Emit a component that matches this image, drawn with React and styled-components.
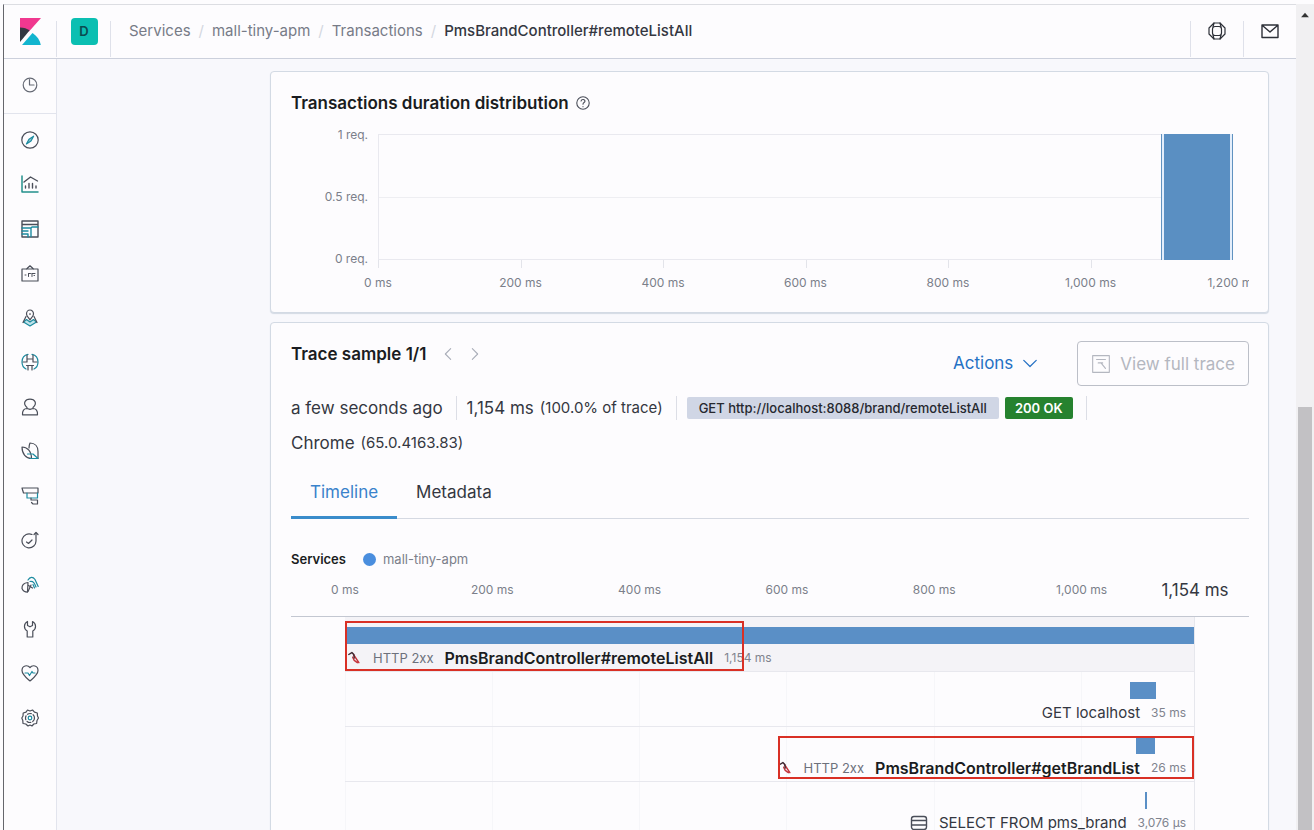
import React, { useState } from "react";
import styled, { createGlobalStyle, css } from "styled-components";

const GlobalStyle = createGlobalStyle`
  * {
    box-sizing: border-box;
  }
  body {
    margin: 0;
    color: #343741;
    font-family: Inter, "Liberation Sans", sans-serif;
    font-size: 16px;
    line-height: 24px;
  }
  button {
    padding: 0;
    border: none;
    background: none;
    color: inherit;
    font: inherit;
    cursor: pointer;
  }
  a {
    color: inherit;
    text-decoration: none;
  }
  svg {
    display: block;
    flex: none;
  }
`;

const Window = styled.div`
  display: flex;
  height: 100vh;
  padding: 4px 0 0 3px;
  overflow: hidden;
  background-color: #fdfcfe;
`;
const Page = styled.div`
  flex: 1;
  min-width: 0;
  display: flex;
  flex-direction: column;
  border-top: 1px solid #dcdde2;
  border-left: 1px solid #65666c;
`;

/* header */
const Header = styled.header`
  display: flex;
  flex: none;
  height: 54px;
  padding-bottom: 1px;
  border-bottom: 1px solid #ccd0dc;
`;
const HeaderCell = styled.div`
  width: ${(props) => props.$width || "53px"};
  display: flex;
  align-items: center;
  justify-content: center;
  background-image: linear-gradient(#dfe1ea, #dfe1ea);
  background-repeat: no-repeat;
  background-size: 1px 36px;
  background-position: ${(props) => props.$line || "right"} bottom;
`;
const Space = styled.button`
  width: 27px;
  height: 27px;
  border-radius: 4px;
  background-color: #0bbfb2;
  color: #0b4a50;
  font-size: 13px;
  font-weight: 600;
`;
const Breadcrumbs = styled.nav`
  flex: 1;
  display: flex;
  align-items: center;
  gap: 8px;
  padding-left: 18px;
  color: #777b87;
  font-size: 15px;
`;
const Slash = styled.span`
  color: #d3d7e0;
`;
const Current = styled.span`
  color: #343741;
  font-weight: 500;
`;

/* side bar */
const Body = styled.div`
  flex: 1;
  min-height: 0;
  display: flex;
`;
const Sidebar = styled.aside`
  width: 53px;
  display: flex;
  flex-direction: column;
  flex: none;
  border-right: 1px solid #e2e4ed;
`;
const Recent = styled.div`
  display: flex;
  justify-content: center;
  padding: 17px 0 19px;
  border-bottom: 1px solid #e2e4ed;
`;
const AppList = styled.nav`
  flex: 1;
  display: flex;
  flex-direction: column;
  align-items: center;
  justify-content: space-between;
  padding: 17px 0 103px;
`;

/* content */
const Main = styled.main`
  flex: 1;
  min-width: 0;
  display: flex;
  flex-direction: column;
  gap: 9px;
  padding: 12px 27px 0 213px;
  background-color: #f8f8fc;
`;
const Panel = styled.section`
  flex: none;
  padding: ${(props) => props.$padding};
  border: 1px solid #d3dae4;
  border-radius: 4px;
  background-color: #fdfcfe;
  box-shadow: 0 1px 1px #d3dae4;
`;
const Title = styled.h2`
  display: flex;
  align-items: center;
  gap: 7px;
  margin: 0;
  color: #1a1c21;
  font-size: 17px;
  font-weight: 600;
  line-height: 26px;
`;

/* distribution chart */
const Chart = styled.div`
  display: grid;
  grid-template-columns: 87px 1fr;
  margin-top: 9px;
  padding: 9px 16px 0 0;
  overflow: hidden;
  color: #7b7f8a;
  font-size: 12px;
  line-height: 16px;
`;
const YAxis = styled.div`
  display: flex;
  flex-direction: column;
  justify-content: space-between;
  align-items: flex-end;
  margin: -7px 10px -7px 0;
`;
const Plot = styled.div`
  display: flex;
  justify-content: flex-end;
  height: 126px;
  border: solid #e9e9ef;
  border-width: 1px 0 1px 1px;
  background: linear-gradient(#eeeef2, #eeeef2) 0 62px / 100% 1px no-repeat;
`;
const Bucket = styled.button`
  width: 8.4%;
  margin: -1px 0;
  padding: 0 2px;
  border: solid #6092c0;
  border-width: 0 1px;
  background-color: #e4eefb;
`;
const BucketFill = styled.span`
  display: block;
  height: 100%;
  background-color: #5a8fc2;
`;
const Ticks = styled.div`
  grid-column: 2;
  display: grid;
  grid-template-columns: repeat(6, 1fr);
  height: 8px;
`;
const Tick = styled.span`
  border-left: 1px solid #e3e4ea;
`;
const XAxis = styled.div`
  grid-column: 2;
  display: flex;
  justify-content: space-between;
  padding: 7px 0 21px;
`;
const XLabel = styled.span`
  width: 0;
  display: flex;
  justify-content: center;
  white-space: nowrap;
`;

/* trace sample */
const TraceHeader = styled.div`
  display: flex;
  align-items: flex-start;
`;
const Pager = styled.div`
  display: flex;
  flex: 1;
  gap: 11px;
  padding: 5px 0 0 14px;
`;
const ActionsButton = styled.button`
  display: flex;
  align-items: center;
  gap: 9px;
  height: 44px;
  margin-right: 39px;
  color: #2571c4;
  font-size: 17px;
`;
const FullTraceButton = styled.button`
  display: flex;
  align-items: center;
  gap: 9px;
  height: 45px;
  padding: 0 13px;
  border: 1px solid #bcbfc8;
  border-radius: 4px;
  color: #b4b7c0;
  font-size: 17px;
  cursor: not-allowed;
`;
const Summary = styled.div`
  display: flex;
  flex-wrap: wrap;
  align-items: center;
  row-gap: 11px;
  margin-top: 10px;
  font-size: 17px;
`;
const SummaryItem = styled.div`
  display: flex;
  align-items: center;
  gap: 6px;
  height: 24px;
  padding-right: 13px;
  margin-right: 10px;
  border-right: 1px solid #dcdee6;
  white-space: nowrap;
  &:last-child {
    border: none;
  }
`;
const Small = styled.span`
  font-size: 15px;
`;
const Badge = styled.span`
  padding: 0 12px;
  border-radius: 2px;
  font-size: 13px;
  font-weight: 500;
  line-height: 22px;
  color: #26282f;
  background-color: #d0d6e5;
  ${(props) =>
    props.$success &&
    css`
      padding: 0 10px;
      font-weight: 600;
      color: #fff;
      background-color: #26822f;
    `}
`;
const Tabs = styled.div`
  display: flex;
  margin-top: 12px;
  border-bottom: 1px solid #d5d9e2;
`;
const Tab = styled.button`
  height: 52px;
  margin-bottom: -1px;
  padding: 0 19px;
  border-bottom: 3px solid transparent;
  font-size: 17px;
  ${(props) =>
    props.$active &&
    css`
      border-color: #3a8ccb;
      color: #3a82cb;
    `}
`;
const Legend = styled.div`
  display: flex;
  align-items: center;
  margin-top: 28px;
  color: #7b7f8a;
  font-size: 13px;
`;
const LegendTitle = styled.strong`
  margin-right: 17px;
  color: #1a1c21;
  font-weight: 600;
`;
const Dot = styled.span`
  width: 13px;
  height: 13px;
  margin-right: 7px;
  border-radius: 50%;
  background-color: #4a8ede;
`;

/* waterfall */
const Scale = styled.div`
  display: grid;
  grid-template-columns: repeat(5, minmax(0, 200fr)) minmax(0, 154fr) 0;
  align-items: center;
  height: 46px;
  padding: 0 54px 7px;
  border-bottom: 1px solid #c3c7d1;
  color: #7b7f8a;
  font-size: 12px;
`;
const ScaleEnd = styled(XLabel)`
  color: #343741;
  font-size: 17px;
`;
const Waterfall = styled.div`
  margin: 0 54px;
  border-right: 1px solid #e6e7ed;
  background-image: repeating-linear-gradient(
    to right,
    #f6f6f9 0 1px,
    transparent 1px 17.33%
  );
`;
const Row = styled.div`
  position: relative;
  height: 55px;
  padding-top: 10px;
  border-bottom: 1px solid #e8e8ee;
  background-color: ${(props) => (props.$selected ? "#f4f3f7" : "transparent")};
`;
const Bar = styled.div`
  height: 17px;
  background-color: #5a8fc6;
`;
const RowLabel = styled.div`
  display: flex;
  align-items: center;
  justify-content: ${(props) => (props.$align === "end" ? "flex-end" : "flex-start")};
  gap: 11px;
  padding: 2px 8px 0 3px;
  white-space: nowrap;
`;
const Status = styled.span`
  color: #6d717c;
  font-size: 13px;
`;
const SpanName = styled.span`
  color: #343741;
  font-size: 15px;
  ${(props) =>
    props.$bold &&
    css`
      color: #1a1c21;
      font-size: 16px;
      font-weight: 600;
    `}
`;
const Duration = styled.span`
  color: #80838e;
  font-size: 12px;
`;
/* frame laid over a span of interest */
const Marker = styled.div`
  position: absolute;
  border: 2px solid #d93025;
  ${(props) =>
    props.$align === "end"
      ? "top: 9px; right: 0; bottom: 2px; width: 49%;"
      : "top: 4px; left: 0; bottom: 0; width: 47%;"}
`;

/* window scroll bar */
const Scrollbar = styled.div`
  width: 18px;
  flex: none;
  display: flex;
  flex-direction: column;
  align-items: center;
  padding-top: 6px;
  background-color: #f1f0f2;
`;
const ScrollThumb = styled.div`
  width: 14px;
  flex: 1;
  margin-top: 387px;
  background-color: #c2c1c4;
`;

const DARK = "#4a4e59";
const TEAL = "#1c8ba0";

const Icon = ({ size = 18, color = DARK, width = 1.2, children }) => (
  <svg
    width={size}
    height={size}
    viewBox="0 0 18 18"
    fill="none"
    stroke={color}
    strokeWidth={width}
    strokeLinecap="round"
    strokeLinejoin="round"
    aria-hidden="true"
  >
    {children}
  </svg>
);

const apps = [
  {
    name: "Discover",
    icon: (
      <>
        <circle cx="9" cy="9" r="8.2" />
        <path d="M12.6 5.2 10 10l-4.6 3L8 8.2z" stroke={TEAL} fill="#8cc5cf" />
      </>
    ),
  },
  {
    name: "Visualize",
    icon: (
      <>
        <path d="M1 1v16h16" stroke="#23908c" strokeWidth="1.5" />
        <path d="m3 7 6.500-5 7 4M4.500 11v2M8 8.500V13M11.500 8.500V13M15 11v2" strokeWidth="1.4" />
      </>
    ),
  },
  {
    name: "Dashboard",
    icon: (
      <>
        <path d="M1 1h16v16H1zM1 4.500h16" strokeWidth="1.4" />
        <path d="M1 8h9l1-1h6M10 8v8.500M1 11h6M1 14h6v3" stroke={TEAL} strokeWidth="1.4" />
      </>
    ),
  },
  {
    name: "Canvas",
    icon: (
      <>
        <path d="M1 5h16v12H1zM5.500 5 9 1.800 12.500 5" />
        <path d="M4 11h1M7.500 9.500v3M7.500 9.500h2M11 9.500h3M11 9.500v3M13 11.500h.5" strokeWidth="1" />
      </>
    ),
  },
  {
    name: "Maps",
    icon: (
      <>
        <path d="m2.500 13 3-2.500L9 13l3.500-2.500 3 2.500L9 17z" stroke={TEAL} fill="#bfe3ea" />
        <path d="M5.500 5a3.500 4 0 0 1 7 0c0 2-2 3.500-3.500 6-1.500-2.500-3.500-4-3.500-6zM9 4.500v1" />
        <path d="M5 7.500 2 13.500M13 7.500l3 6" />
      </>
    ),
  },
  {
    name: "Machine Learning",
    icon: (
      <>
        <path d="M7 1.300C3.500 2 1 5 1 9s2 6 4 7M11 1.300c3.500.7 6 3.700 6 7.700s-2 6-4 7" stroke={TEAL} />
        <path d="M6 2v4h6V2M2 9h4M12 9h4M5.500 12.500h7M6 6v3M12 6v3M7 12.500V17M11 12.500V17" />
      </>
    ),
  },
  {
    name: "Metrics",
    icon: (
      <>
        <path d="M6 9.500C1.500 5.500 4 1.200 9 1.200s7.500 4.300 3 8.300" />
        <path d="M1.500 16.800c-.3-4 1.500-6.300 4.500-6.300l3 .8 3-.8c3 0 4.800 2.300 4.500 6.300z" />
      </>
    ),
  },
  {
    name: "Logs",
    icon: (
      <>
        <path d="M8 6c0-3 .5-4 1-5 5 0 8 3.500 8 8.500v7H9" />
        <path d="M1 5c5 0 9.500 4 9.500 11.500C5 16.500 1 12 1 5z" />
        <path d="M6.500 12H12l5 4.500H9" stroke={TEAL} />
      </>
    ),
  },
  {
    name: "APM",
    icon: (
      <>
        <path d="M1 1h16v5H2.500z" />
        <path d="M6 6v5h10.500V6" stroke={TEAL} />
        <path d="M10 11v2h6.500v4H12l-1.500-1.500" />
      </>
    ),
  },
  {
    name: "Uptime",
    icon: (
      <>
        <path d="M11 3.500A7 7 0 1 0 15 9.500V2" />
        <path d="m13 3.500 2-2 2 2M5.500 11l2 1.500 3.500-3.500" />
      </>
    ),
  },
  {
    name: "SIEM",
    icon: (
      <>
        <path d="M7 6.500C3 7 .8 9.500 1 12.500c1 2.500 3 3.700 5.500 3.700z" />
        <path d="M7 15.500 10 9M7.500 9.500l4 2.500" />
        <path d="M7 4C9 .5 12 .5 14 3.500l3.200 7M9 5.500c3.500-.5 4.500 1.500 6 5.500M12 8.500l1.500 3.500" stroke={TEAL} />
      </>
    ),
  },
  {
    name: "Dev Tools",
    icon: (
      <path d="M6.500 1.500v4l2.500 1.300 2.500-1.300v-4c4 2 4 7.500.3 9.500V17H6.200v-6c-3.700-2-3.700-7.500.3-9.500z" />
    ),
  },
  {
    name: "Stack Monitoring",
    icon: (
      <>
        <path d="M9 3.500C6.500.5 1 1.500 1 6.500c0 4 4 7 8 10.500 4-3.500 8-6.500 8-10.500 0-5-5.500-6-8-3z" />
        <path d="M4 9h3l1.500 2.500L11 7.500l1 1.500h2" stroke={TEAL} />
      </>
    ),
  },
  {
    name: "Management",
    icon: (
      <>
        <path d="m6.500 1 2.500 1 2.500-1 2 2.200 2.800.8.200 3 1 2-1.500 2.500-.4 3-2.800.5L11 17l-2-1-2 1-2.200-2-2.800-.5-.2-3L.8 9l1.200-2 .2-3 2.800-.8z" />
        <circle cx="9" cy="9" r="4.500" strokeDasharray="4 2" />
        <circle cx="9" cy="9" r="1.800" stroke={TEAL} />
      </>
    ),
  },
];

const chevrons = {
  left: "M12 3 6 9l6 6",
  right: "m6 3 6 6-6 6",
  down: "m2 6 7 7 7-7",
};

const AgentIcon = () => (
  <Icon size={14} color="#c4323a" width={1.8}>
    <path d="M7 4.500 14 15M6 8l2 4 4 3" />
    <path d="M1 4.500 5 2l2.500 2.500L8 9" stroke="#3b2730" />
  </Icon>
);

const spans = [
  {
    name: "PmsBrandController#remoteListAll",
    status: "HTTP 2xx",
    duration: "1,154 ms",
    left: 0,
    width: 100,
    bold: true,
    selected: true,
    marked: true,
    align: "start",
  },
  { name: "GET localhost", duration: "35 ms", left: 92.5, width: 3, align: "end" },
  {
    name: "PmsBrandController#getBrandList",
    status: "HTTP 2xx",
    duration: "26 ms",
    left: 93.2,
    width: 2.2,
    bold: true,
    marked: true,
    align: "end",
  },
  {
    name: "SELECT FROM pms_brand",
    duration: "3,076 µs",
    left: 94.2,
    width: 0.3,
    db: true,
    align: "end",
  },
];

const App = () => {
  const [tab, setTab] = useState("Timeline");

  return (
    <Window>
      <GlobalStyle />
      <Page>
        <Header>
          <HeaderCell>
            <svg width="21" height="27" viewBox="0 0 21 27" aria-label="Kibana">
              <path d="M0 0h21L9 13.500 0 10z" fill="#f0388f" />
              <path d="M0 9.500c4 0 7 1.200 9.500 3L0 24z" fill="#343741" />
              <path d="M12.500 15c4.500 3 7.500 7 8.300 12H2z" fill="#12b5cf" />
            </svg>
          </HeaderCell>
          <HeaderCell $width="54px">
            <Space aria-label="Default space">D</Space>
          </HeaderCell>
          <Breadcrumbs>
            <a href="#services">Services</a>
            <Slash>/</Slash>
            <a href="#mall-tiny-apm">mall-tiny-apm</a>
            <Slash>/</Slash>
            <a href="#transactions">Transactions</a>
            <Slash>/</Slash>
            <Current>PmsBrandController#remoteListAll</Current>
          </Breadcrumbs>
          <HeaderCell $line="left">
            <button aria-label="Help">
              <Icon color="#2d3038">
                <path d="M6 1h6l5 5v6l-5 5H6l-5-5V6z" />
                <rect x="4.5" y="4.5" width="9" height="9" rx="2.5" />
                <path d="M6 1 5 5M12 1l1 4M6 17l-1-4M12 17l1-4" />
              </Icon>
            </button>
          </HeaderCell>
          <HeaderCell $line="left">
            <button aria-label="Newsfeed">
              <Icon color="#2d3038" width={1.4}>
                <path d="M1 3h16v12.500H1zM2 4l7 6 7-6" />
              </Icon>
            </button>
          </HeaderCell>
        </Header>
        <Body>
          <Sidebar>
            <Recent>
              <button aria-label="Recently viewed">
                <Icon color="#666a75">
                  <circle cx="9" cy="9" r="6.8" />
                  <path d="M8.500 3.500V9H13" />
                </Icon>
              </button>
            </Recent>
            <AppList>
              {apps.map((app) => (
                <a key={app.name} href="#app" aria-label={app.name}>
                  <Icon>{app.icon}</Icon>
                </a>
              ))}
            </AppList>
          </Sidebar>
          <Main>
            <Panel $padding="18px 19px 0 20px">
              <Title>
                Transactions duration distribution
                <Icon size={14} width={1.4}>
                  <circle cx="9" cy="9" r="8" />
                  <path d="M6.500 6.500C7 3.500 12 4 11.500 7c-.2 1.500-2.500 1.500-2.500 3.500M9 13.500v.3" />
                </Icon>
              </Title>
              <Chart>
                <YAxis>
                  <span>1 req.</span>
                  <span>0.5 req.</span>
                  <span>0 req.</span>
                </YAxis>
                <Plot>
                  <Bucket aria-label="1,100 to 1,200 ms, 1 request">
                    <BucketFill />
                  </Bucket>
                </Plot>
                <Ticks>
                  {[0, 200, 400, 600, 800, 1000].map((ms) => (
                    <Tick key={ms} />
                  ))}
                </Ticks>
                <XAxis>
                  {[0, 200, 400, 600, 800, 1000, 1200].map((ms) => (
                    <XLabel key={ms}>{ms.toLocaleString("en-US")} ms</XLabel>
                  ))}
                </XAxis>
              </Chart>
            </Panel>
            <Panel $padding="18px 19px 0 20px">
              <TraceHeader>
                <Title>Trace sample 1/1</Title>
                <Pager>
                  <button aria-label="Previous sample">
                    <Icon size={16} color="#a9adb8">
                      <path d={chevrons.left} />
                    </Icon>
                  </button>
                  <button aria-label="Next sample">
                    <Icon size={16} color="#a9adb8">
                      <path d={chevrons.right} />
                    </Icon>
                  </button>
                </Pager>
                <ActionsButton>
                  Actions
                  <Icon size={16} color="#2571c4" width={1.4}>
                    <path d={chevrons.down} />
                  </Icon>
                </ActionsButton>
                <FullTraceButton>
                  <Icon size={20} color="#b4b7c0" width={1}>
                    <path d="M1.500 1.500h15v15h-15zM5 5h8M6.500 8h4M9 8l4 5" />
                  </Icon>
                  View full trace
                </FullTraceButton>
              </TraceHeader>
              <Summary>
                <SummaryItem>a few seconds ago</SummaryItem>
                <SummaryItem>
                  1,154 ms <Small>(100.0% of trace)</Small>
                </SummaryItem>
                <SummaryItem>
                  <Badge>GET http://localhost:8088/brand/remoteListAll</Badge>
                  <Badge $success>200 OK</Badge>
                </SummaryItem>
                <SummaryItem>
                  Chrome <Small>(65.0.4163.83)</Small>
                </SummaryItem>
              </Summary>
              <Tabs role="tablist">
                {["Timeline", "Metadata"].map((name) => (
                  <Tab
                    key={name}
                    role="tab"
                    aria-selected={tab === name}
                    $active={tab === name}
                    onClick={() => setTab(name)}
                  >
                    {name}
                  </Tab>
                ))}
              </Tabs>
              <Legend>
                <LegendTitle>Services</LegendTitle>
                <Dot />
                mall-tiny-apm
              </Legend>
              <Scale>
                {[0, 200, 400, 600, 800, 1000].map((ms) => (
                  <XLabel key={ms}>{ms.toLocaleString("en-US")} ms</XLabel>
                ))}
                <ScaleEnd>1,154 ms</ScaleEnd>
              </Scale>
              <Waterfall>
                {spans.map((span) => (
                  <Row key={span.name} $selected={span.selected}>
                    <Bar style={{ marginLeft: `${span.left}%`, width: `${span.width}%` }} />
                    <RowLabel $align={span.align}>
                      {span.status && <AgentIcon />}
                      {span.status && <Status>{span.status}</Status>}
                      {span.db && (
                        <Icon width={1.4}>
                          <rect x="1.5" y="2.5" width="15" height="13" rx="2.5" />
                          <path d="M2 6.500h14M2 11h14" />
                        </Icon>
                      )}
                      <SpanName $bold={span.bold}>{span.name}</SpanName>
                      <Duration>{span.duration}</Duration>
                    </RowLabel>
                    {span.marked && <Marker $align={span.align} />}
                  </Row>
                ))}
              </Waterfall>
            </Panel>
          </Main>
        </Body>
      </Page>
      <Scrollbar>
        <Icon size={10}>
          <path d="M2 13 9 5l7 8z" fill="#333" stroke="none" />
        </Icon>
        <ScrollThumb />
      </Scrollbar>
    </Window>
  );
};

export default App;
